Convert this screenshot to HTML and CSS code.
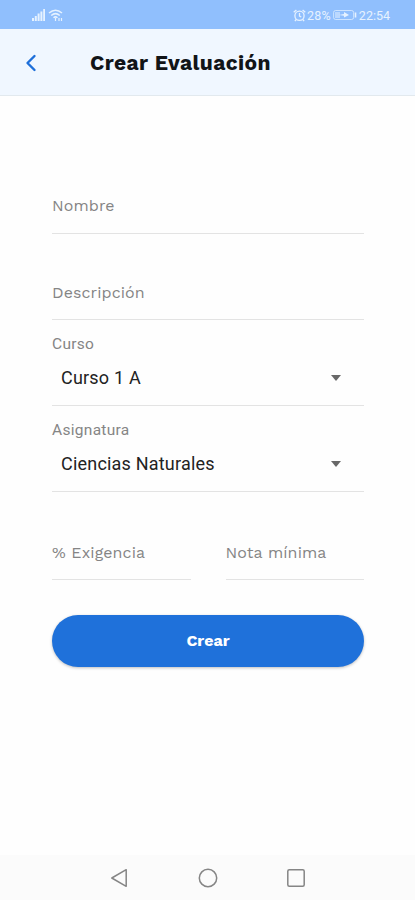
FILE: index.html
```html
<!DOCTYPE html>
<html lang="es">
<head>
    <meta charset="UTF-8">
    <meta name="viewport" content="width=device-width, initial-scale=1.0">
    <title>Crear Evaluación</title>
    <link rel="stylesheet" href="styles.css">
</head>
<body>
    <div class="status-bar">
        <div class="status-left">
            <svg width="13" height="13" viewBox="0 0 13 13" fill="currentColor">
                <path d="M0 9h2v3H0zM2.8 7h2v5h-2zM5.6 4.5h2V12h-2zM8.4 2.5h2V12h-2zM11.2 0H13v12h-1.800z"/>
            </svg>
            <svg width="16" height="13" viewBox="0 0 16 13" fill="none" stroke="currentColor" stroke-width="1.500">
                <path d="M1 4Q7.500-1.500 14 4M3.200 6.500q4.300-3.700 8.600 0M5.500 8.700q2-1.700 4 0"/>
                <path d="M7.500 9v3M11 9v3M13.500 9v3" stroke-width="1.200"/>
            </svg>
        </div>
        <div class="status-right">
            <svg width="13" height="13" viewBox="0 0 13 13" fill="none" stroke="currentColor" stroke-width="1.300">
                <circle cx="6.500" cy="6.800" r="4.600"/>
                <path d="M6.500 4v3l1.800 1M.7 3.200L3.400.9M12.300 3.200L9.600.9M3.200 10.500l-1.300 1.700M9.800 10.500l1.300 1.700"/>
            </svg>
            <span class="battery-level">28%</span>
            <svg class="battery" width="24" height="12" viewBox="0 0 24 12" fill="none" stroke="currentColor">
                <rect x=".6" y="1.500" width="20" height="9" rx="2" opacity=".7"/>
                <rect x="2" y="3" width="5" height="6" fill="currentColor" stroke="none" opacity=".5"/>
                <path d="M22.500 3.500v5" stroke-width="1.600"/>
                <path d="M6 6l5-1V3l5 3-5 2.500V6.800z" fill="currentColor" stroke="none"/>
            </svg>
            <span class="clock">22:54</span>
        </div>
    </div>

    <header class="header">
        <svg class="back" width="12" height="18" viewBox="0 0 12 18" fill="none">
            <path d="M9.500 2L2.500 9l7 7" stroke="currentColor" stroke-width="2.400" stroke-linecap="round" stroke-linejoin="round"/>
        </svg>
        <h1>Crear Evaluación</h1>
    </header>

    <main class="form-container">
        <div class="field field-nombre">Nombre</div>
        <div class="field">Descripción</div>

        <div class="select-field">
            <div class="select-label">Curso</div>
            <div class="select-value">
                <span>Curso 1 A</span>
                <span class="arrow"></span>
            </div>
        </div>
        <div class="select-field">
            <div class="select-label">Asignatura</div>
            <div class="select-value">
                <span>Ciencias Naturales</span>
                <span class="arrow"></span>
            </div>
        </div>

        <div class="row">
            <div class="field">% Exigencia</div>
            <div class="field">Nota mínima</div>
        </div>

        <button class="submit">Crear</button>
    </main>

    <nav class="nav-bar">
        <svg width="20" height="20" viewBox="0 0 20 20">
            <path d="M1.800 10L16.200 1.700v16.600z"/>
        </svg>
        <svg width="20" height="20" viewBox="0 0 20 20">
            <circle cx="10" cy="10" r="8.700"/>
        </svg>
        <svg width="20" height="20" viewBox="0 0 20 20">
            <rect x="1.800" y="1.800" width="16.400" height="16.400" rx="1.500"/>
        </svg>
    </nav>
</body>
</html>
```

FILE: styles.css
```css
* {
    margin: 0;
    padding: 0;
    box-sizing: border-box;
}

body {
    display: flex;
    flex-direction: column;
    height: 100vh;
    background: #fefefe;
    font-family: "Work Sans", Inter, sans-serif;
}

svg {
    display: block;
}

.status-bar {
    display: flex;
    justify-content: space-between;
    align-items: center;
    height: 29px;
    padding: 1px 24px 0 32px;
    background: #90bffd;
    color: #e6f2ff;
    font-family: Roboto, sans-serif;
    font-size: 12.500px;
}

.status-left,
.status-right {
    display: flex;
    align-items: center;
}

.status-left {
    gap: 3px;
}

.status-right {
    margin-right: 1px;
}

.battery-level {
    margin-left: 1px;
    letter-spacing: 0.2px;
}

.battery {
    margin: 0 2px;
}

.header {
    display: flex;
    align-items: center;
    height: 67px;
    padding: 1px 0 0 25px;
    background: #f0f7ff;
    border-bottom: 1px solid #e2e9ee;
}

.back {
    color: #1e6fd9;
}

.header h1 {
    margin-left: 53px;
    font-size: 21px;
    font-weight: 700;
    letter-spacing: 0.4px;
    color: #111417;
}

.form-container {
    display: flex;
    flex-direction: column;
    flex: 1;
    padding: 84px 51px 0 52px;
}

.field {
    height: 86px;
    padding-top: 49px;
    border-bottom: 1px solid #e3e3e3;
    font-size: 16px;
    line-height: 20px;
    letter-spacing: 0.1px;
    color: #858585;
}

.field-nombre {
    height: 54px;
    padding-top: 16px;
}

.select-field {
    height: 86px;
    padding-top: 14px;
    border-bottom: 1px solid #e3e3e3;
    font-family: Roboto, sans-serif;
}

.select-label {
    font-size: 15.500px;
    line-height: 20px;
    letter-spacing: 0.3px;
    color: #858585;
}

.select-value {
    display: flex;
    justify-content: space-between;
    align-items: center;
    height: 24px;
    margin-top: 11px;
    padding: 0 23px 0 9px;
    font-size: 18px;
    letter-spacing: 0.2px;
    color: #222;
}

.arrow {
    margin-top: 1px;
    border: 5.500px solid transparent;
    border-top: 6px solid #686868;
    border-bottom: 0;
}

.row {
    display: flex;
    gap: 35px;
}

.row .field {
    flex: 1;
    height: 88px;
    padding-top: 51px;
}

.submit {
    height: 52px;
    margin-top: 35px;
    padding-bottom: 2px;
    border: none;
    border-radius: 26px;
    background: #1f71da;
    box-shadow: 0 1px 3px rgba(0, 0, 0, 0.25);
    color: white;
    font-family: inherit;
    font-size: 16px;
    font-weight: 700;
}

.nav-bar {
    display: flex;
    justify-content: center;
    align-items: center;
    gap: 68px;
    height: 45px;
    background: #fbfbfb;
}

.nav-bar svg {
    fill: none;
    stroke: #858585;
    stroke-width: 1.500;
    stroke-linejoin: round;
}
```
